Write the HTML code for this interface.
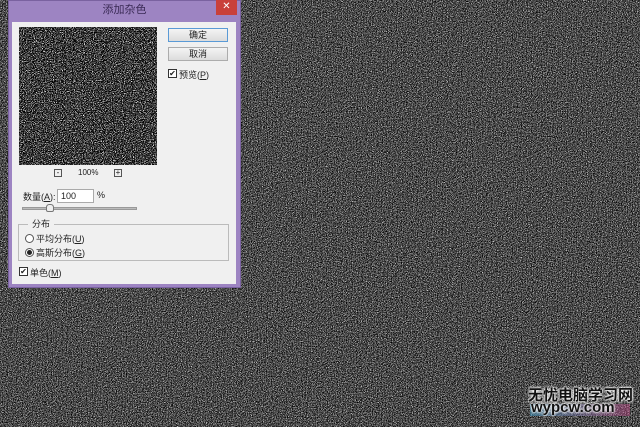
<!DOCTYPE html>
<html><head><meta charset="utf-8"><style>
*{margin:0;padding:0;box-sizing:border-box}
body{width:640px;height:427px;overflow:hidden;position:relative;background:#333;font-family:"Liberation Sans","Noto Sans CJK SC",sans-serif;font-size:9px;color:#222}
.abs{position:absolute}
svg.noise{position:absolute;left:0;top:0}
.dlg{left:8px;top:0;width:233px;height:288px;background:#9d84c2;border:1px solid #7a62a0}
.panel{left:12px;top:22px;width:224px;height:262px;background:#f0f0f0}
.btn{width:60px;height:14px;background:linear-gradient(#f4f4f4,#dcdcdc);border:1px solid #acacac;text-align:center;line-height:12px;font-size:9px}
.chk{width:9px;height:9px;border:1px solid #333;background:#fff;font-size:8px;line-height:7px;text-align:center}
.rad{width:9px;height:9px;border:1px solid #555;border-radius:50%;background:#fff}
</style></head><body>
<svg class="noise" width="640" height="427">
<filter id="n" x="0" y="0" width="100%" height="100%" color-interpolation-filters="sRGB"><feTurbulence type="fractalNoise" baseFrequency="1.2" numOctaves="1" seed="3"/><feColorMatrix type="matrix" values="0.33 0.33 0.33 0 0 0.33 0.33 0.33 0 0 0.33 0.33 0.33 0 0 0 0 0 0 1"/><feComponentTransfer><feFuncR type="linear" slope="4" intercept="-1.7"/><feFuncG type="linear" slope="4" intercept="-1.7"/><feFuncB type="linear" slope="4" intercept="-1.7"/></feComponentTransfer></filter>
<rect width="640" height="427" filter="url(#n)"/>
</svg>
<div class="abs dlg"></div>
<div class="abs" style="left:8px;top:0;width:233px;height:22px;text-align:center;line-height:20px;font-size:11px;color:#3a2a55">添加杂色</div>
<div class="abs" style="left:216px;top:0;width:21px;height:15px;background:#c9403a;color:#fff;text-align:center;line-height:14px;font-size:10px">✕</div>
<div class="abs panel"></div>
<svg class="abs" style="left:19px;top:27px" width="138" height="138">
<filter id="n2" x="0" y="0" width="100%" height="100%" color-interpolation-filters="sRGB"><feTurbulence type="fractalNoise" baseFrequency="1.1" numOctaves="1" seed="7"/><feColorMatrix type="matrix" values="0.33 0.33 0.33 0 0 0.33 0.33 0.33 0 0 0.33 0.33 0.33 0 0 0 0 0 0 1"/><feComponentTransfer><feFuncR type="linear" slope="7" intercept="-3.3"/><feFuncG type="linear" slope="7" intercept="-3.3"/><feFuncB type="linear" slope="7" intercept="-3.3"/></feComponentTransfer></filter>
<rect width="138" height="138" filter="url(#n2)"/>
</svg>
<div class="abs btn" style="left:168px;top:28px;border-color:#5a9ad6">确定</div>
<div class="abs btn" style="left:168px;top:47px">取消</div>
<div class="abs chk" style="left:168px;top:69px">✔</div>
<div class="abs" style="left:179px;top:68px">预览(<u>P</u>)</div>
<div class="abs" style="left:54px;top:169px;width:8px;height:8px;border:1px solid #555;font-size:8px;line-height:5px;text-align:center">-</div>
<div class="abs" style="left:78px;top:168px;font-size:8px">100%</div>
<div class="abs" style="left:114px;top:169px;width:8px;height:8px;border:1px solid #555;font-size:8px;line-height:5px;text-align:center">+</div>
<div class="abs" style="left:23px;top:190px">数量(<u>A</u>):</div>
<div class="abs" style="left:57px;top:189px;width:37px;height:14px;background:#fff;border:1px solid #aaa;padding-left:3px;line-height:12px">100</div>
<div class="abs" style="left:97px;top:190px">%</div>
<div class="abs" style="left:22px;top:207px;width:115px;height:3px;background:#bbb;border:1px solid #999"></div>
<div class="abs" style="left:46px;top:204px;width:8px;height:8px;background:#eee;border:1px solid #777;border-radius:40% 40% 2px 2px"></div>
<div class="abs" style="left:18px;top:224px;width:211px;height:37px;border:1px solid #bbb"></div>
<div class="abs" style="left:28px;top:217px;padding:0 4px;background:#f0f0f0">分布</div>
<div class="abs rad" style="left:25px;top:234px"></div>
<div class="abs" style="left:36px;top:232px">平均分布(<u>U</u>)</div>
<div class="abs rad" style="left:25px;top:248px"><div style="width:5px;height:5px;margin:1px;border-radius:50%;background:#222"></div></div>
<div class="abs" style="left:36px;top:246px">高斯分布(<u>G</u>)</div>
<div class="abs chk" style="left:19px;top:267px">✔</div>
<div class="abs" style="left:30px;top:266px">单色(<u>M</u>)</div>
<div class="abs" style="left:530px;top:404px;width:100px;height:12px;background:linear-gradient(90deg,#3aa6d8,#c84a8a);opacity:.45"></div>
<div class="abs" style="left:528px;top:384px;font-size:15px;font-weight:bold;color:#111;text-shadow:0 0 2px #fff,0 0 2px #fff,0 0 3px #fff">无忧电脑学习网</div>
<div class="abs" style="left:531px;top:399px;font-size:15px;font-weight:bold;color:#111;text-shadow:0 0 2px #fff,0 0 2px #fff,0 0 3px #fff">wypcw.com</div>
</body></html>
